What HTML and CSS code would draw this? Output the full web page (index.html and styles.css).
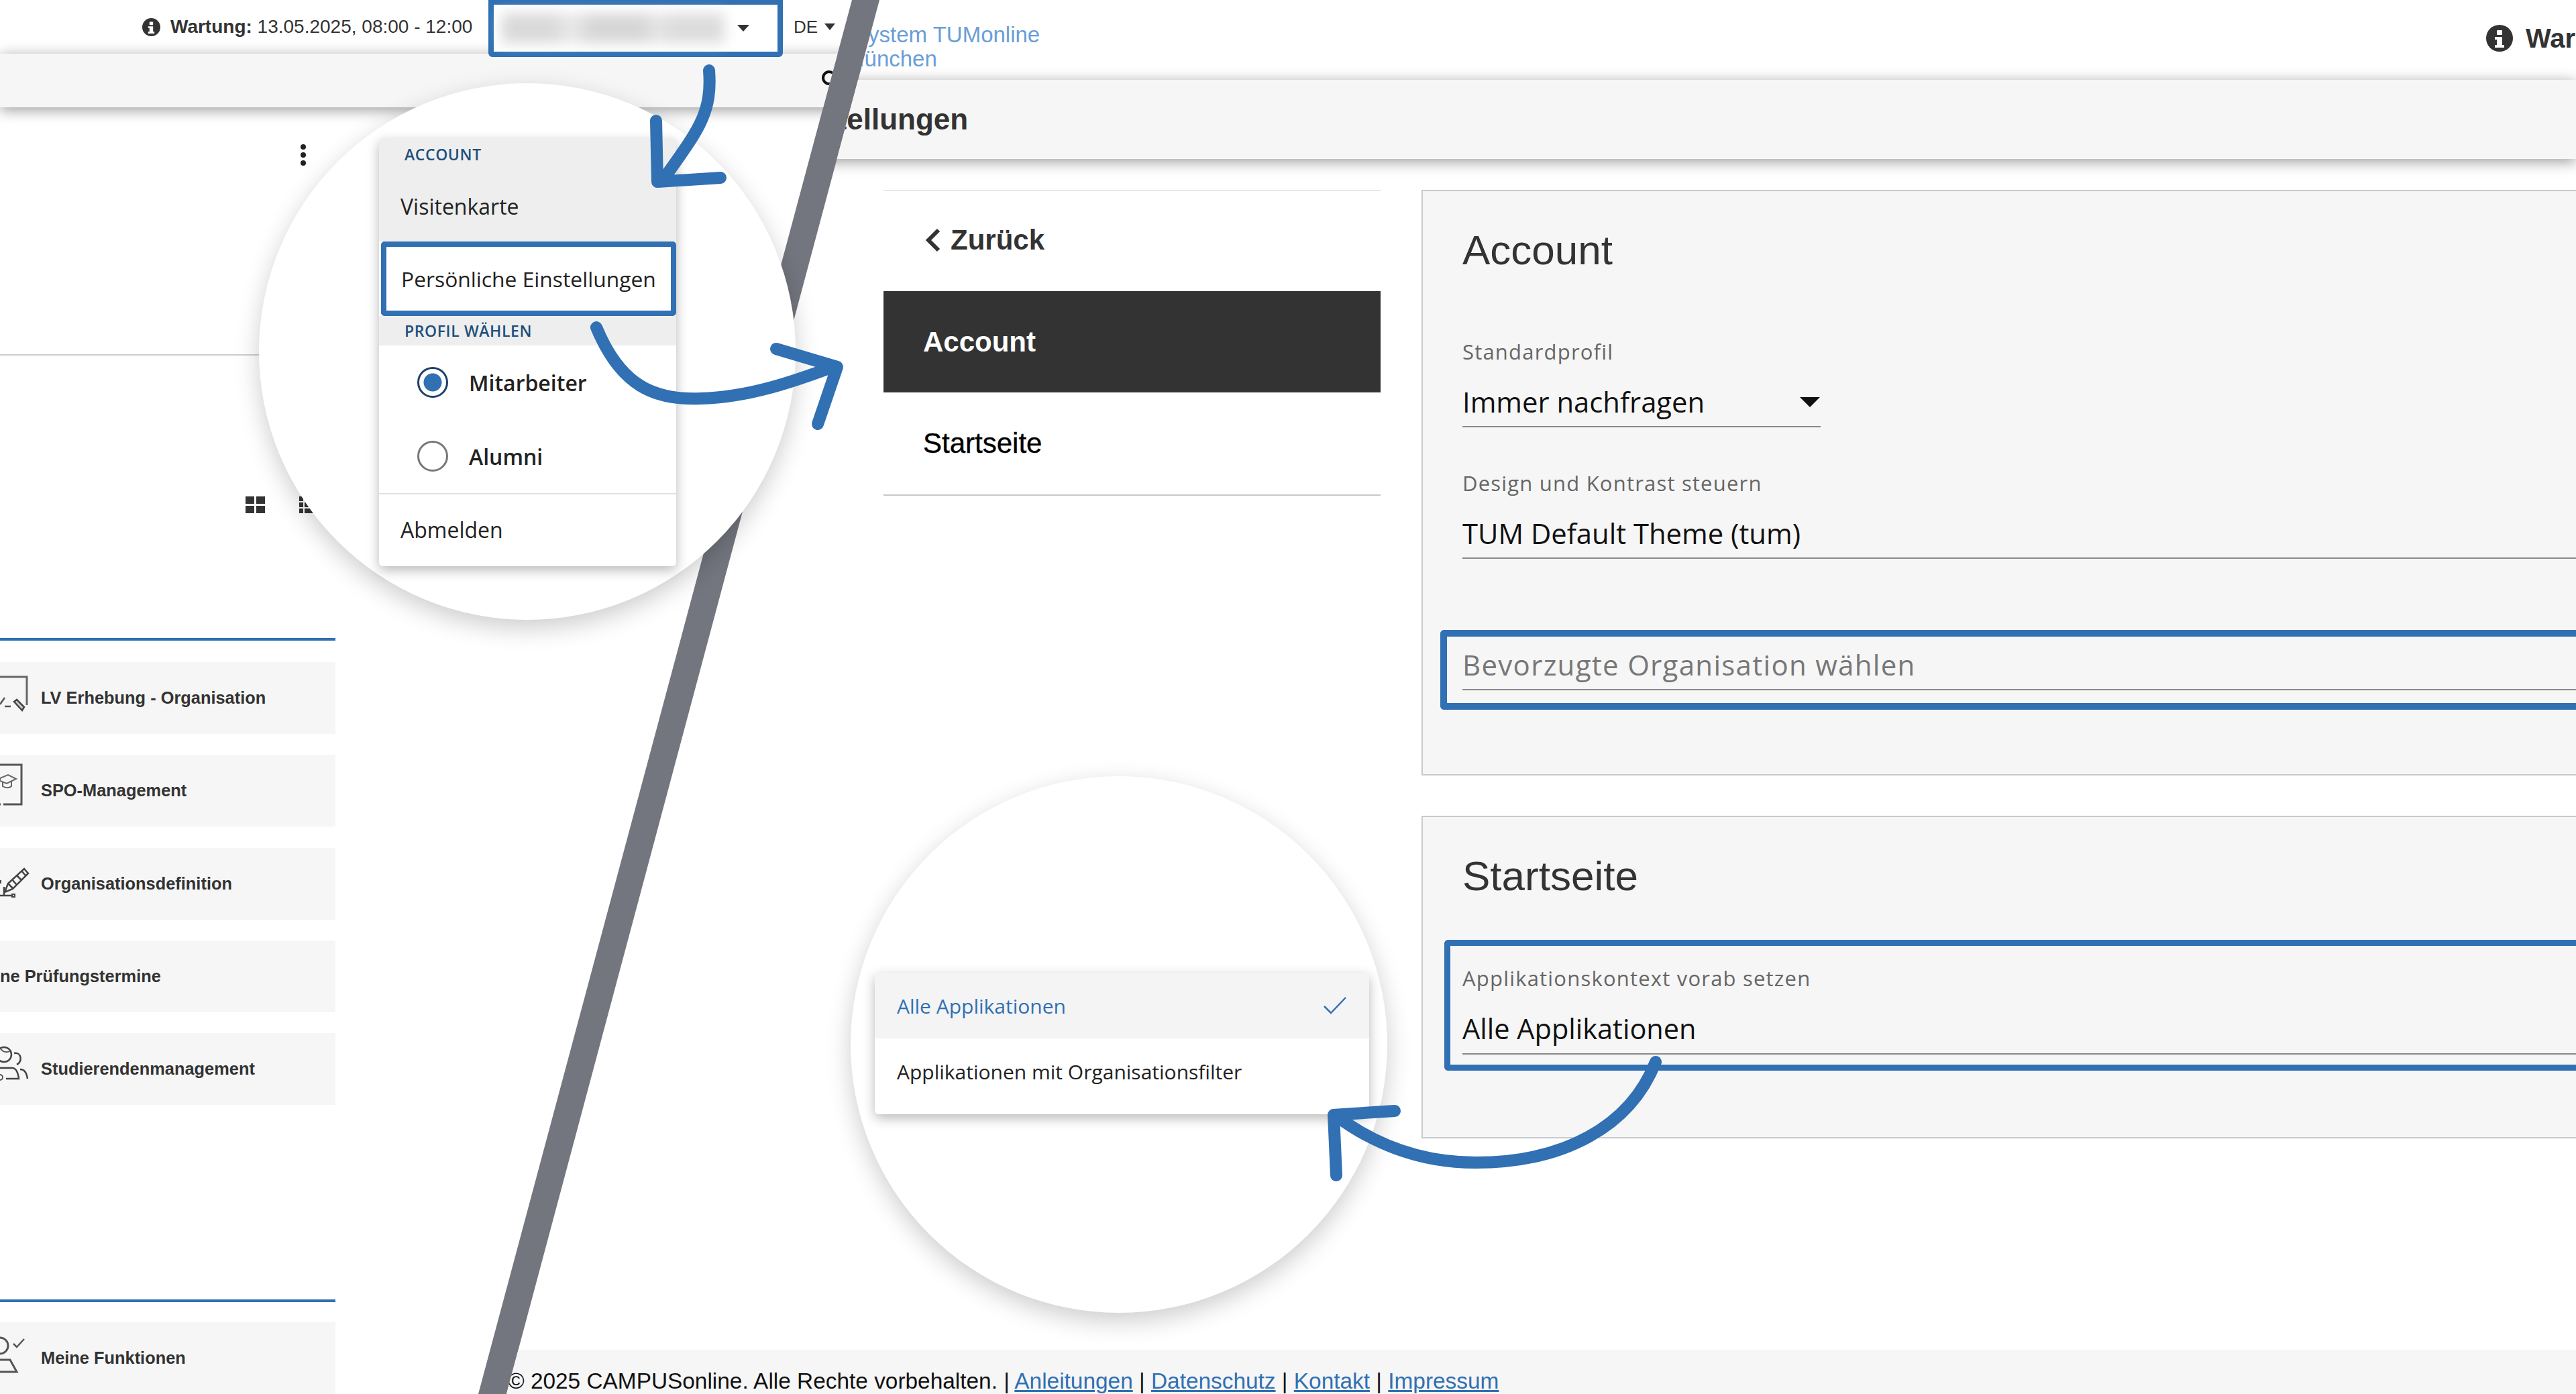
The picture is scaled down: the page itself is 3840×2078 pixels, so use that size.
FILE: index.html
```html
<!DOCTYPE html>
<html lang="de">
<head>
<meta charset="utf-8">
<title>Persönliche Einstellungen</title>
<link rel="stylesheet" href="styles.css">
</head>
<body>
<div class="stage">

  <section class="screen screen-left">
    <header class="l-head">
      <svg class="info" viewBox="0 0 40 40"><circle cx="20" cy="20" r="20" fill="#333"/><rect x="16" y="8" width="8" height="7" rx="1" fill="#fff"/><path d="M13 18h11v12h3v4H13v-4h3v-8h-3z" fill="#fff"/></svg>
      <span class="l-warn"><b>Wartung:</b> 13.05.2025, 08:00 - 12:00</span>
      <div class="user-box">
        <span class="blurred"></span>
        <span class="caret"></span>
      </div>
      <span class="lang">DE</span><span class="caret lang-caret"></span>
    </header>
    <div class="l-bar">
      <svg class="search" viewBox="0 0 28 28"><circle cx="14" cy="13" r="9" fill="none" stroke="#111" stroke-width="4"/></svg>
    </div>
    <div class="l-side">
      <div class="l-tools"><span class="kebab"><i></i><i></i><i></i></span></div>
      <div class="l-views">
        <svg width="30" height="26" viewBox="0 0 30 26"><path fill="#333" d="M0 0h13v11H0zM16 0h13v11H16zM0 14h13v11H0zM16 14h13v11H16z"/></svg>
        <svg width="30" height="26" viewBox="0 0 30 26"><path fill="#333" d="M0 0h6v7H0zM0 9h6v7H0zM0 18h6v7H0zM8 9h20v7H8zM8 18h20v7H8z"/></svg>
      </div>
      <div class="l-sec">
        <a class="l-row">
          <svg class="l-ico" viewBox="0 0 61 107"><path d="M0 22h40v42" fill="none" stroke="#666" stroke-width="3"/><path d="M0 63l7-10M7 66h9" fill="none" stroke="#555" stroke-width="2.5"/><path d="M21 59l4-3 11 11-3 5z" fill="#ccc" stroke="#444" stroke-width="2.5"/></svg>
          <span>LV Erhebung - Organisation</span>
        </a>
        <a class="l-row">
          <svg class="l-ico" viewBox="0 0 61 107"><path d="M0 15h32v59H5M0 74h1" fill="none" stroke="#555" stroke-width="3"/><path d="M0 35l12-5 12 6-14 7-10-4zM4 41v6c4 3 10 3 13 0v-7" fill="none" stroke="#666" stroke-width="2"/></svg>
          <span>SPO-Management</span>
        </a>
        <a class="l-row">
          <svg class="l-ico" viewBox="0 0 61 107"><path d="M7 63l5-13 24-22 6 7-23 23zM12 50l8 8M18 44l7 8M25 38l7 7M32 31l6 7" transform="translate(0 3)" fill="none" stroke="#444" stroke-width="2.5"/><path d="M6 58v13H18M0 71h6" fill="none" stroke="#444" stroke-width="2.5"/><rect x="18" y="69" width="4" height="4" fill="none" stroke="#444" stroke-width="2"/><rect x="0" y="48" width="2" height="5" fill="#444"/></svg>
          <span>Organisationsdefinition</span>
        </a>
        <a class="l-row l-row-cut">
          <span>ne Prüfungstermine</span>
        </a>
        <a class="l-row">
          <svg class="l-ico" viewBox="0 0 61 107"><circle cx="6" cy="32" r="11" fill="none" stroke="#444" stroke-width="2.5"/><path d="M21 30c11-2 13 13 4 17M0 52h18c7 0 9 8 10 16H9M30 54c7 0 10 7 11 14" fill="none" stroke="#444" stroke-width="2.5"/><path d="M0 22c5 8 12 7 17 4" fill="none" stroke="#555" stroke-width="2"/><circle cx="0" cy="66" r="4" fill="none" stroke="#555" stroke-width="2"/></svg>
          <span>Studierendenmanagement</span>
        </a>
      </div>
      <div class="l-sec l-sec-end">
        <a class="l-row">
          <svg class="l-ico" viewBox="0 0 61 107"><circle cx="0" cy="35" r="12" fill="none" stroke="#555" stroke-width="3"/><path d="M0 56h15l10 18H0" fill="none" stroke="#555" stroke-width="3"/><path d="M20 32l5 5 11-12" fill="none" stroke="#555" stroke-width="2.5"/></svg>
          <span>Meine Funktionen</span>
        </a>
      </div>
    </div>
  </section>

  <section class="screen screen-right">
    <header class="r-head">
      <div class="logo-text">
        <span>Informationssystem TUMonline</span>
        <span>Universität München</span>
      </div>
      <div class="r-warn">
        <svg class="info-lg" viewBox="0 0 40 40"><circle cx="20" cy="20" r="20" fill="#333"/><rect x="16" y="8" width="8" height="7" rx="1" fill="#fff"/><path d="M13 18h11v12h3v4H13v-4h3v-8h-3z" fill="#fff"/></svg>
        <b>War</b>
      </div>
    </header>
    <div class="r-bar"><h1>Persönliche Einstellungen</h1></div>
    <div class="r-body">
      <nav class="r-nav">
        <a class="nav-item nav-back">
          <svg class="chev" viewBox="0 0 26 36"><path d="M21 3L6 18l15 15" fill="none" stroke="#333" stroke-width="6"/></svg>
          <span>Zurück</span>
        </a>
        <a class="nav-item nav-active">Account</a>
        <a class="nav-item nav-plain">Startseite</a>
      </nav>
      <div class="r-panels">
        <section class="panel panel-account">
          <h2>Account</h2>
          <div class="field field-short">
            <label>Standardprofil</label>
            <div class="value">Immer nachfragen<span class="caret caret-lg"></span></div>
          </div>
          <div class="field">
            <label>Design und Kontrast steuern</label>
            <div class="value">TUM Default Theme (tum)</div>
          </div>
          <div class="field highlight highlight-a">
            <div class="value placeholder">Bevorzugte Organisation wählen</div>
          </div>
        </section>
        <section class="panel panel-start">
          <h2>Startseite</h2>
          <div class="field highlight highlight-b">
            <label>Applikationskontext vorab setzen</label>
            <div class="value">Alle Applikationen</div>
          </div>
        </section>
      </div>
    </div>
    <footer class="r-foot">© 2025 CAMPUSonline. Alle Rechte vorbehalten. | <a>Anleitungen</a> | <a>Datenschutz</a> | <a>Kontakt</a> | <a>Impressum</a></footer>
  </section>

  <div class="lens lens-a">
    <div class="menu menu-a">
      <div class="m-head m-head-a">ACCOUNT</div>
      <div class="m-item m-item-grey">Visitenkarte</div>
      <div class="m-item m-item-focus">Persönliche Einstellungen</div>
      <div class="m-head m-head-b">PROFIL WÄHLEN</div>
      <div class="m-radio"><span class="radio radio-on"></span>Mitarbeiter</div>
      <div class="m-radio"><span class="radio"></span>Alumni</div>
      <div class="m-item m-item-last">Abmelden</div>
    </div>
  </div>

  <div class="lens lens-b">
    <div class="menu menu-b">
      <div class="opt opt-on">Alle Applikationen
        <svg class="check" viewBox="0 0 36 26"><path d="M2 14l10 10L34 1" fill="none" stroke="#3070b3" stroke-width="2.5"/></svg>
      </div>
      <div class="opt">Applikationen mit Organisationsfilter</div>
    </div>
  </div>

  <svg class="arrows" viewBox="0 0 3840 2078">
    <g fill="none" stroke="#3070b3" stroke-width="18" stroke-linecap="round" stroke-linejoin="round">
      <path d="M1057 105C1062 170 1040 195 987 270"/>
      <path d="M978 180L980 271 1074 265"/>
      <path d="M889 488C925 575 975 597 1045 594 1115 592 1180 570 1244 546"/>
      <path d="M1157 520L1248 547 1219 632"/>
      <path d="M2468 1583C2430 1680 2330 1733 2200 1733 2110 1733 2040 1700 1990 1662"/>
      <path d="M2079 1656L1988 1662 1992 1752"/>
    </g>
  </svg>
</div>
</body>
</html>
```
FILE: styles.css
```css
* { box-sizing: border-box; }
html, body { margin: 0; padding: 0; background: #fff; }
.stage { position: relative; width: 3840px; height: 2078px; overflow: hidden; background: #74767f; font-family: "Liberation Sans", Arial, sans-serif; color: #333; }
.screen { position: absolute; inset: 0; background: #fff; display: flex; flex-direction: column; }
.screen-left { clip-path: polygon(0 0, 1270px 0, 713px 2078px, 0 2078px); }
.screen-right { clip-path: polygon(1311px 0, 3840px 0, 3840px 2078px, 755px 2078px); }

/* left screen */
.l-head { height: 80px; flex: none; display: flex; align-items: center; padding-left: 212px; font-size: 28px; position: relative; z-index: 3; }
.info { width: 27px; height: 27px; margin-right: 15px; flex: none; }
.l-warn { white-space: nowrap; width: 474px; }
.user-box { width: 439px; height: 85px; align-self: flex-start; border: 8px solid #3070b3; border-top-width: 7px; border-radius: 0 0 6px 6px; display: flex; align-items: center; padding-left: 12px; background: #fff; }
.blurred { width: 332px; height: 44px; background: linear-gradient(90deg, #d9d9d9 0 24%, #e6e6e6 28% 34%, #d6d6d6 40% 64%, #e4e4e4 68% 72%, #dcdcdc 76% 100%); filter: blur(10px); }
.caret { display: inline-block; width: 0; height: 0; border-left: 9px solid transparent; border-right: 9px solid transparent; border-top: 10px solid #333; }
.user-box .caret { margin-left: 19px; }
.lang { font-size: 26px; margin-left: 16px; }
.lang-caret { margin-left: 10px; border-left-width: 8px; border-right-width: 8px; }
.l-bar { height: 80px; flex: none; background: #f6f6f6; box-shadow: 0 4px 20px rgba(0,0,0,.4); position: relative; z-index: 2; display: flex; align-items: center; padding-left: 1222px; }
.search { width: 28px; height: 28px; margin-top: -7px; }
.l-side { flex: 1; width: 500px; display: flex; flex-direction: column; }
.l-tools { height: 370px; border-bottom: 2px solid #ccc; display: flex; justify-content: flex-end; padding: 55px 44px 0 0; }
.kebab { display: flex; flex-direction: column; gap: 4px; }
.kebab i { width: 8px; height: 8px; border-radius: 50%; background: #222; }
.l-views { display: flex; gap: 50px; padding: 210px 0 0 366px; height: 421px; }
.l-sec { border-top: 4px solid #3070b3; padding-top: 32px; display: flex; flex-direction: column; gap: 31.25px; }
.l-sec-end { margin-top: auto; padding-top: 30px; }
.l-row { height: 107px; background: #f6f6f6; display: flex; align-items: center; font-size: 25.4px; font-weight: 700; color: #333; white-space: nowrap; }
.l-ico { width: 61px; height: 107px; flex: none; }

/* right screen */
.r-head { height: 119px; flex: none; display: flex; align-items: center; padding-left: 1096px; }
.logo-text { display: flex; flex-direction: column; font-size: 33px; line-height: 36px; color: #6a9ed6; white-space: nowrap; margin-top: 20px; }
.r-warn { margin-left: auto; width: 134px; overflow: hidden; display: flex; align-items: center; gap: 19px; font-size: 40px; white-space: nowrap; flex: none; margin-top: -5px; }
.info-lg { width: 40px; height: 40px; flex: none; }
.r-bar { height: 118px; flex: none; background: #f6f6f6; box-shadow: 0 4px 20px rgba(0,0,0,.4); position: relative; z-index: 2; display: flex; align-items: center; padding-left: 893px; }
.r-bar h1 { margin: 0; font-size: 44px; font-weight: 700; color: #333; white-space: nowrap; }
.r-body { flex: 1; display: flex; gap: 61px; padding: 46px 0 0 1317px; min-height: 0; }
.r-nav { width: 741px; flex: none; height: 456px; border-top: 2px solid #e8e8e8; border-bottom: 2px solid #c8c8c8; display: flex; flex-direction: column; }
.nav-item { display: flex; align-items: center; font-size: 42px; padding-left: 59px; height: 151px; flex: none; }
.nav-back { font-weight: 700; font-size: 42px; gap: 13px; padding: 0 0 4px 61px; height: 149px; }
.chev { width: 26px; height: 36px; }
.nav-active { background: #333; color: #fff; font-weight: 700; }
.nav-plain { color: #000; flex: 1; -webkit-text-stroke: .4px #000; }
.r-panels { flex: 1; display: flex; flex-direction: column; gap: 60px; margin-right: -20px; }
.panel { background: #f6f6f6; border: 2px solid #c6cacf; padding: 0 0 0 59px; }
.panel-account { height: 873px; }
.panel-start { height: 481px; }
.panel h2 { margin: 0; font-size: 62px; font-weight: 400; color: #333; line-height: 72px; padding-top: 52px; }
.field { font-family: "Open Sans", "Noto Sans", sans-serif; }
.field label { display: block; font-size: 31px; line-height: 42px; color: #666; letter-spacing: 1.2px; margin-bottom: 20px; }
.value { font-size: 41.8px; line-height: 60px; color: #111; border-bottom: 2px solid #888; position: relative; height: 72px; padding-top: 4px; }
.placeholder { color: #777; letter-spacing: 1.3px; font-size: 42px; }
.field-short { width: 534px; margin-top: 94px; }
.field-short + .field { margin-top: 62px; }
.caret-lg { position: absolute; right: 1px; top: 27px; border-left-width: 15px; border-right-width: 15px; border-top-width: 15px; border-top-color: #111; }
.highlight { border: 10px solid #3070b3; border-right: 0; border-radius: 6px 0 0 6px; }
.highlight-a { margin-top: 106px; height: 119px; padding-left: 23px; margin-left: -33px; }
.highlight-a .value { height: 80px; padding-top: 12px; }
.highlight-b { margin-top: 59px; height: 195px; margin-left: -27px; padding: 27px 0 0 18px; border-width: 9px 0 9px 9px; }
.highlight-b label { margin-bottom: 15px; }
.highlight-b .value { height: 78px; padding-top: 9px; font-size: 41.5px; }
.r-foot { height: 66px; flex: none; background: #f6f6f6; font-size: 33.4px; line-height: 38px; padding: 28px 0 0 757px; color: #111; white-space: nowrap; }
.r-foot a { color: #3070b3; text-decoration: underline; }

/* magnifying lenses */
.lens { position: absolute; width: 800px; height: 800px; border-radius: 50%; background: #fff; box-shadow: 0 12px 36px rgba(0,0,0,.2); font-family: "Open Sans", "Noto Sans", sans-serif; }
.lens-a { left: 386px; top: 124px; }
.lens-b { left: 1268px; top: 1157px; }
.menu { position: absolute; background: #fff; border-radius: 6px; box-shadow: 0 6px 18px rgba(0,0,0,.28); color: #222; }
.menu-a { left: 179px; top: 82px; width: 443px; height: 638px; display: flex; flex-direction: column; }
.m-head { background: #eee; color: #1d4f7c; font-size: 23px; font-weight: 600; letter-spacing: .6px; padding-left: 38px; display: flex; align-items: center; flex: none; }
.m-head-a { height: 48px; border-radius: 6px 6px 0 0; }
.m-head-b { height: 44px; }
.m-item { font-size: 32px; padding-left: 32px; display: flex; align-items: center; flex: none; }
.m-item-grey { background: #eee; height: 106px; }
.m-item-focus { height: 111px; background: #fff; border: 8px solid #3070b3; border-radius: 5px; margin-left: 3px; padding-left: 22px; white-space: nowrap; font-size: 31.8px; }
.m-radio { height: 110px; flex: none; display: flex; align-items: center; gap: 31px; padding-left: 57px; font-size: 32px; font-weight: 600; }
.radio { width: 46px; height: 46px; border-radius: 50%; border: 3px solid #777; background: #fff; flex: none; }
.radio-on { border-color: #1d4068; background: radial-gradient(circle, #3070b3 0 13px, #fff 14px); }
.m-item-last { flex: 1; border-top: 2px solid #e2e2e2; border-radius: 0 0 6px 6px; padding-bottom: 2px; }
.menu-b { left: 36px; top: 293px; width: 737px; height: 211px; font-size: 30px; }
.opt { height: 98px; display: flex; align-items: center; padding-left: 33px; justify-content: space-between; }
.opt-on { background: #f4f4f4; color: #3070b3; border-radius: 6px 6px 0 0; }
.check { width: 36px; height: 26px; margin-right: 33px; }
.arrows { position: absolute; left: 0; top: 0; width: 3840px; height: 2078px; pointer-events: none; }
```
